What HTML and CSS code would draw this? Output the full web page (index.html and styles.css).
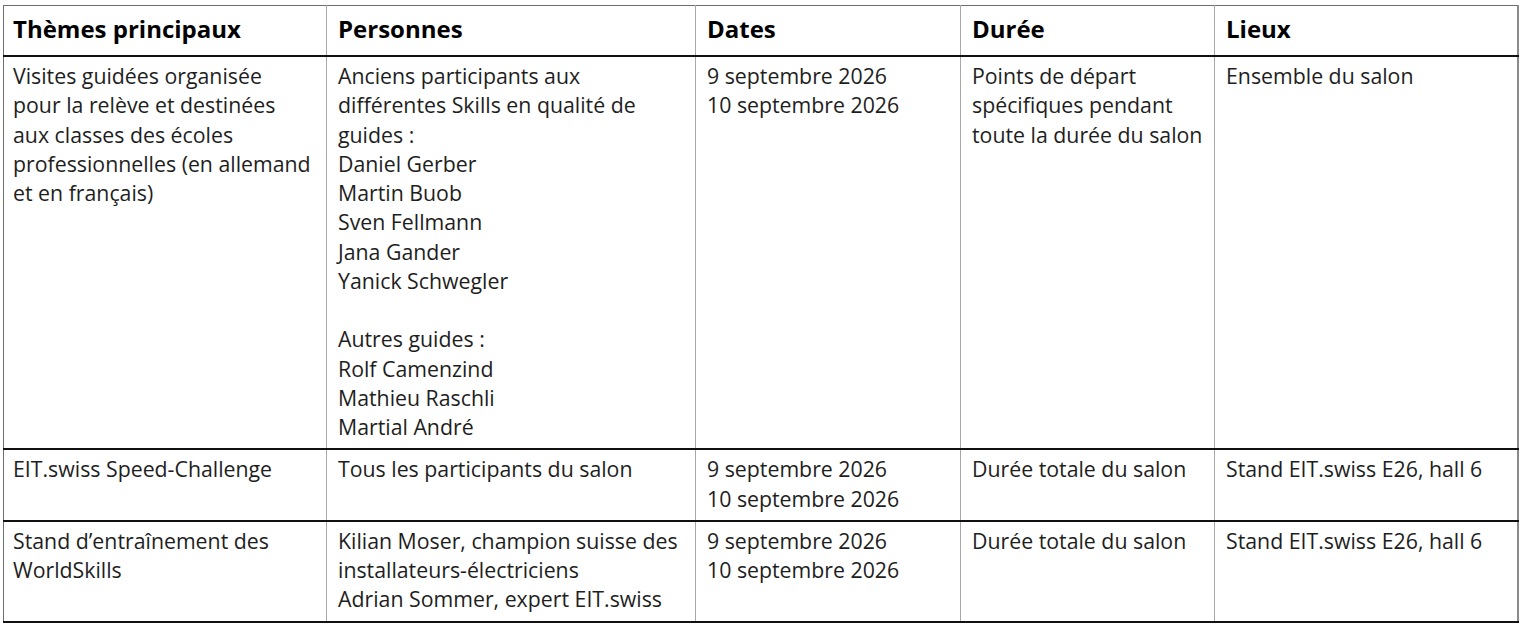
FILE: index.html
```html
<!DOCTYPE html>
<html lang="fr">
<head>
<meta charset="utf-8">
<title>Programme</title>
<link rel="stylesheet" href="styles.css">
</head>
<body>
<table class="grid">
  <colgroup>
    <col class="c1"><col class="c2"><col class="c3"><col class="c4"><col class="c5">
  </colgroup>
  <thead>
    <tr>
      <th>Thèmes principaux</th>
      <th>Personnes</th>
      <th>Dates</th>
      <th>Durée</th>
      <th>Lieux</th>
    </tr>
  </thead>
  <tbody>
    <tr>
      <td>Visites guidées organisée<br>pour la relève et destinées<br>aux classes des écoles<br>professionnelles (en allemand<br>et en français)</td>
      <td>Anciens participants aux<br>différentes Skills en qualité de<br>guides :<br>Daniel Gerber<br>Martin Buob<br>Sven Fellmann<br>Jana Gander<br>Yanick Schwegler<br><br>Autres guides :<br>Rolf Camenzind<br>Mathieu Raschli<br>Martial André</td>
      <td>9 septembre 2026<br>10 septembre 2026</td>
      <td>Points de départ<br>spécifiques pendant<br>toute la durée du salon</td>
      <td>Ensemble du salon</td>
    </tr>
    <tr>
      <td>EIT.swiss Speed-Challenge</td>
      <td>Tous les participants du salon</td>
      <td>9 septembre 2026<br>10 septembre 2026</td>
      <td>Durée totale du salon</td>
      <td>Stand EIT.swiss E26, hall 6</td>
    </tr>
    <tr>
      <td>Stand d’entraînement des<br>WorldSkills</td>
      <td>Kilian Moser, champion suisse des<br>installateurs-électriciens<br>Adrian Sommer, expert EIT.swiss</td>
      <td>9 septembre 2026<br>10 septembre 2026</td>
      <td>Durée totale du salon</td>
      <td>Stand EIT.swiss E26, hall 6</td>
    </tr>
  </tbody>
</table>
</body>
</html>
```

FILE: styles.css
```css
html, body {
  margin: 0;
  padding: 0;
  background: #ffffff;
}

body {
  padding: 5px 0 0 3px;
  font-family: "Open Sans", "Liberation Sans", sans-serif;
  color: #1e1e1e;
}

.grid {
  width: 1514px;
  border-collapse: collapse;
  table-layout: fixed;
  border-top: 1px solid #6e6e6e;
  border-left: 1px solid #6e6e6e;
  border-right: 2px solid #8a8a8a;
}

.c1 { width: 323px; }
.c2 { width: 369px; }
.c3 { width: 265px; }
.c4 { width: 254px; }
.c5 { width: 303px; }

.grid th,
.grid td {
  vertical-align: top;
  text-align: left;
  white-space: nowrap;
  padding: 4px 10px 7px 11px;
  border-left: 1px solid #a8a8a8;
  border-bottom: 2px solid #111111;
  font-size: 21.3px;
  line-height: 29.25px;
}

.grid th:first-child,
.grid td:first-child {
  border-left: none;
  padding-left: 9px;
}

.grid th {
  font-size: 24px;
  font-weight: 700;
  color: #000000;
  line-height: 29px;
  padding-top: 8px;
  padding-bottom: 12px;
}
```
